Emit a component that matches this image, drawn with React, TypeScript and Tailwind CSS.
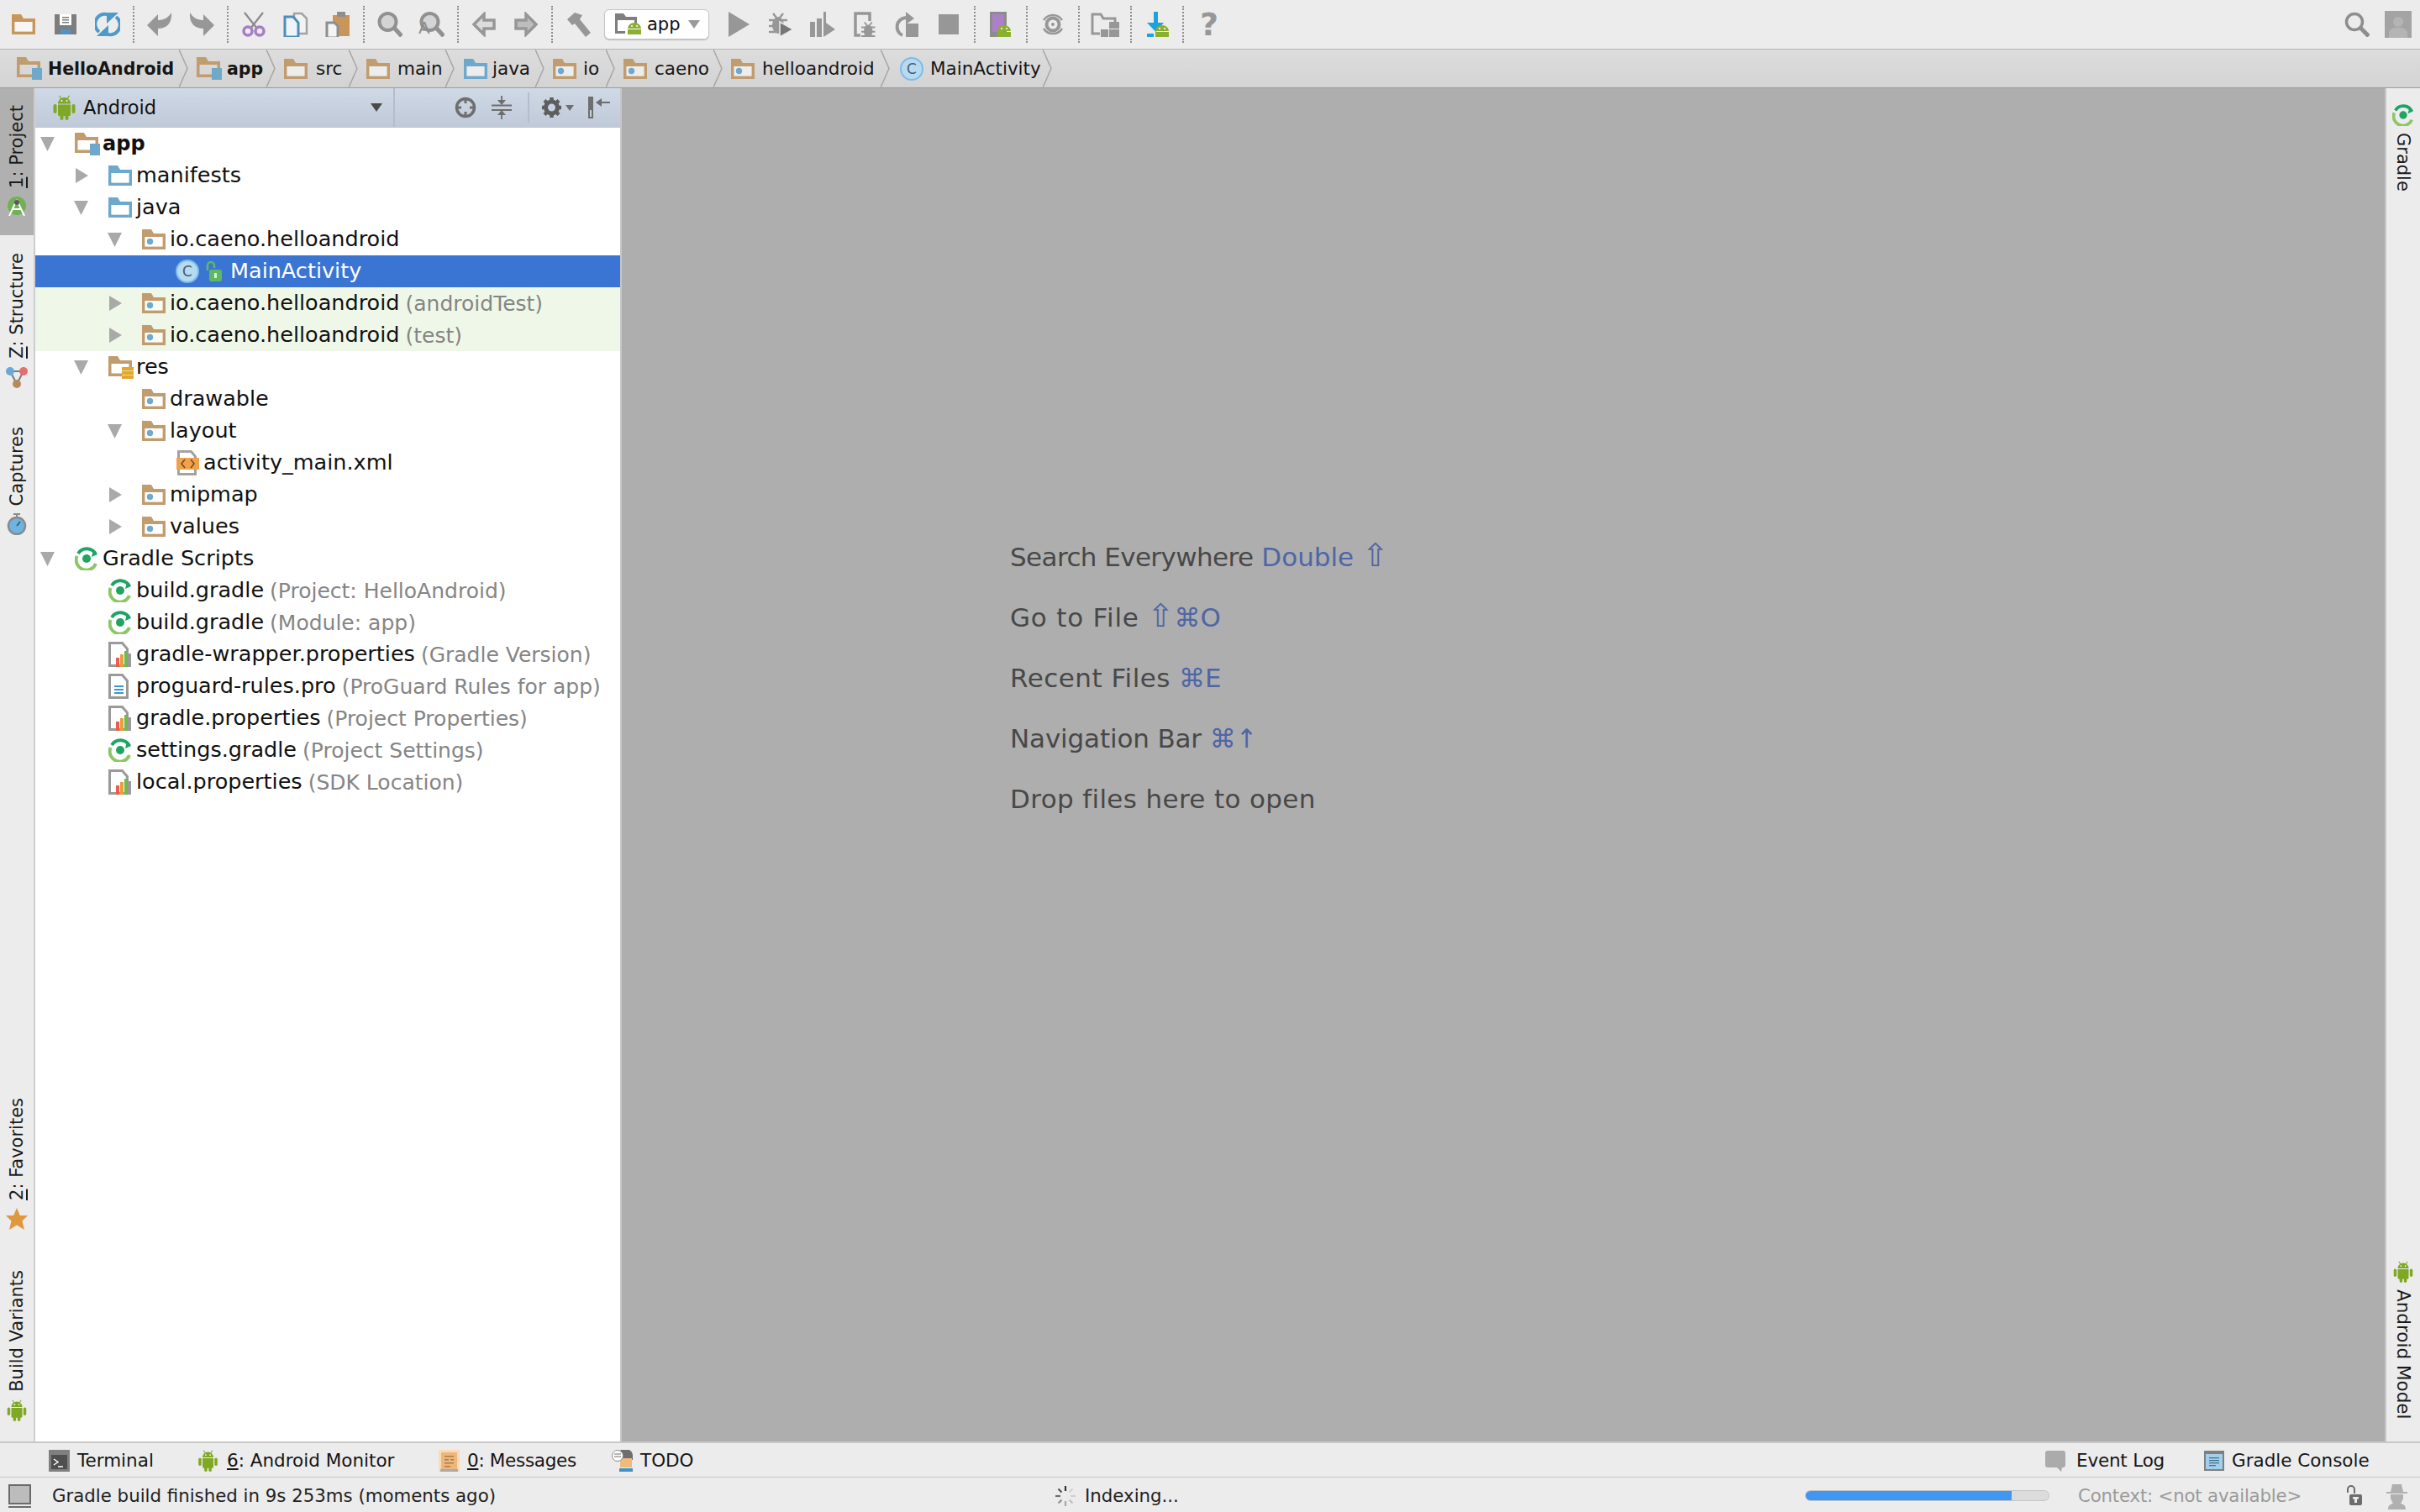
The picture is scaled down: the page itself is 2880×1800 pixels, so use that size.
import React from 'react';

const G = '#979797';

const Folder = ({ c = '#c19c6e', children, w = 28, h = 24, vw = 28, vh = 24 }: any) => (
  <svg width={w} height={h} viewBox={`0 0 ${vw} ${vh}`} className="shrink-0">
    <path fillRule="evenodd" fill={c} d="M0 0h11l3 5h14v19H0zM3.500 9v11.500h21V9z" />
    <path fill="#ffffff" fillOpacity="0.55" d="M3.500 9h21v11.500h-21z" />
    {children}
  </svg>
);
const Pkg = () => (
  <Folder>
    <circle cx="9.500" cy="14.500" r="3.700" fill="#6fa9cf" />
  </Folder>
);
const BlueFolder = () => <Folder c="#6ea8ca" />;
const ModFolder = ({ w = 30, h = 27 }: any) => (
  <svg width={w} height={h} viewBox="0 0 30 27" className="shrink-0">
    <path fillRule="evenodd" fill="#c19c6e" d="M0 0h11l3 5h14v19H0zM3.500 9v11.500h21V9z" />
    <path fill="#6ea8ca" d="M18 13h12v14H18z" />
  </svg>
);
const ResFolder = () => (
  <svg width="30" height="27" viewBox="0 0 30 27" className="shrink-0">
    <path fillRule="evenodd" fill="#c19c6e" d="M0 0h11l3 5h14v19H0zM3.500 9v11.500h21V9z" />
    <path fill="#e0a82e" d="M16 13h14v4H16zM16 18h14v4H16zM16 23h14v4H16z" />
    <path fill="#f6d98a" d="M16 17h14v1H16zM16 22h14v1H16z" />
  </svg>
);
const Gradle = ({ s = 28 }: any) => (
  <svg width={s} height={s} viewBox="0 0 28 28" className="shrink-0">
    <path d="M4 8 A12 12 0 0 1 25 9" fill="none" stroke="#1fa463" strokeWidth="4" />
    <path d="M2.500 11 A12 12 0 0 0 25 20" fill="none" stroke="#8cc665" strokeWidth="4" />
    <path d="M22 4 L27 9 L20 12 Z" fill="#1fa463" />
    <circle cx="14" cy="14" r="5" fill="#1fa463" />
  </svg>
);
const Props = () => (
  <svg width="28" height="30" viewBox="0 0 28 30" className="shrink-0">
    <path fill="#ffffff" stroke="#9a9a9a" strokeWidth="3" d="M1.500 1.500h15l6 7v20h-21z" />
    <path fill="#e5604f" d="M9 19h4v11H9z" />
    <path fill="#ef9a3c" d="M14 15h4v15h-4z" />
    <path fill="#6fb94f" d="M19 11h4v19h-4z" />
    <path fill="#9a9a9a" d="M24 14h3v16h-3z" />
  </svg>
);
const TextDoc = () => (
  <svg width="28" height="30" viewBox="0 0 28 30" className="shrink-0">
    <path fill="#ffffff" stroke="#9a9a9a" strokeWidth="3" d="M1.500 1.500h15l6 7v20h-21z" />
    <path fill="#3f97c9" d="M7 14h11v2H7zM7 18h11v2H7zM7 22h11v2H7z" />
  </svg>
);
const XmlFile = () => (
  <svg width="28" height="30" viewBox="0 0 28 30" className="shrink-0">
    <path fill="#ffffff" stroke="#a2a2a2" strokeWidth="3" d="M3.500 1.500h15l5 6v21h-20z" />
    <path fill="#f0a24b" d="M1 9h27v14H1z" />
    <path fill="none" stroke="#6b4a22" strokeWidth="1.500" d="M11 11l-4 5 4 5M18 11l4 5-4 5" />
  </svg>
);
const ClassIcon = ({ s = 28 }: any) => (
  <svg width={s} height={s} viewBox="0 0 28 28" className="shrink-0">
    <circle cx="14" cy="14" r="13" fill="#b6daf2" stroke="#7dbce8" strokeWidth="2" />
    <text x="14" y="20" textAnchor="middle" fontSize="17" fontFamily="DejaVu Sans" fill="#4c5a66">C</text>
  </svg>
);
const OpenLock = () => (
  <svg width="19" height="24" viewBox="0 0 19 24" className="shrink-0">
    <path fill="none" stroke="#5fb864" strokeWidth="2.500" d="M2 11V5a4 4 0 0 1 8 0v3" />
    <rect x="4" y="10" width="15" height="14" rx="2" fill="#5fb864" />
    <path fill="#d8f0da" d="M10 14h3v6h-3z" />
  </svg>
);
const Android = ({ w = 27, h = 30 }: any) => (
  <svg width={w} height={h} viewBox="0 0 27 30" className="shrink-0">
    <g fill="#7fa825">
      <path d="M6 10.500a7.500 7.500 0 0 1 15 0z" />
      <path d="M8 0.500l2.500 4-1 .6-2.500-4zM19 0.500l-2.500 4 1 .6 2.500-4z" />
      <path d="M6 11.500h15v12a1.500 1.500 0 0 1-1.500 1.500h-12a1.500 1.500 0 0 1-1.500-1.500z" />
      <rect x="0.500" y="11" width="4" height="11" rx="2" />
      <rect x="22.500" y="11" width="4" height="11" rx="2" />
      <rect x="8.500" y="22" width="4" height="8" rx="2" />
      <rect x="14.500" y="22" width="4" height="8" rx="2" />
    </g>
    <circle cx="10.500" cy="7" r="1" fill="#ffffff" />
    <circle cx="16.500" cy="7" r="1" fill="#ffffff" />
  </svg>
);
const Head = ({ x, y }: any) => (
  <g transform={`translate(${x} ${y})`} fill="#8bb02f">
    <path d="M0 7a8 7 0 0 1 16 0z" />
    <path d="M0 8h16v6H0z" />
    <circle cx="5" cy="4" r="1" fill="#ffffff" />
    <circle cx="11" cy="4" r="1" fill="#ffffff" />
  </g>
);
const S = ({ w = 30, h = 30, children }: any) => (
  <svg width={w} height={h} viewBox={`0 0 ${w} ${h}`} className="shrink-0">
    {children}
  </svg>
);

const Undo = () => <S><path fill={G} d="M0 16 L13 3 V10 C21 10 26 6 29 1 C30 14 23 20 13 20 V29 Z" /></S>;
const Redo = () => <S><path fill={G} d="M30 16 L17 3 V10 C9 10 4 6 1 1 C0 14 7 20 17 20 V29 Z" /></S>;
const Cut = () => (
  <S>
    <path stroke="#8a8a8a" strokeWidth="2.200" d="M4 1 L19 20M26 1 L11 20" />
    <circle cx="8" cy="23" r="5" fill="none" stroke="#a47fc4" strokeWidth="3.500" />
    <circle cx="22" cy="23" r="5" fill="none" stroke="#a47fc4" strokeWidth="3.500" />
  </S>
);
const Copy = () => (
  <S>
    <path fill="#f2f2f2" stroke="#a2a2a2" strokeWidth="2.500" d="M13 2h9l6 6v18H13z" />
    <path fill="#eef5fa" stroke="#4f8eb5" strokeWidth="3" d="M2 6h10l6 7v17H2z" />
  </S>
);
const Paste = () => (
  <S>
    <path fill="#c8965a" d="M9 4h20v25H9z" />
    <path fill="#8e8e8e" d="M14 0h10v6H14z" />
    <path fill="#f4f4f4" stroke="#8e8e8e" strokeWidth="3" d="M2 13h9l4 4v14H2z" />
  </S>
);
const Find = () => (
  <S>
    <circle cx="12.500" cy="12" r="10" fill="#d4d4d4" stroke="#919191" strokeWidth="4" />
    <path stroke="#919191" strokeWidth="5" d="M20 19 L29 29" />
  </S>
);
const Replace = () => (
  <div className="relative h-[30px] w-[30px] shrink-0">
    <Find />
    <span className="absolute left-[-1px] top-[8px] text-[20px] leading-[22px] text-[#8e8e8e]">A</span>
  </div>
);
const Back = () => <S w={28}><path fill="#dcdcdc" stroke={G} strokeWidth="3.500" strokeLinejoin="miter" d="M2 15 L14 3 V10 H26 V20 H14 V27 Z" /></S>;
const Fwd = () => <S w={28}><path fill="#bdbdbd" stroke={G} strokeWidth="3.500" d="M26 15 L14 3 V10 H2 V20 H14 V27 Z" /></S>;
const Hammer = () => <S><path fill={G} d="M2 9 L11 1 L20 4 L17 9 L30 25 L24 30 L11 14 L8 16 Z" /></S>;
const Run = () => <S w={26}><path fill={G} d="M1 0 L26 15 L1 30Z" /></S>;
const BugBody = ({ x = 0, y = 0, s = 1 }: any) => (
  <g transform={`translate(${x} ${y}) scale(${s})`} fill={G} stroke={G}>
    <ellipse cx="11" cy="16" rx="7" ry="10" stroke="none" />
    <path strokeWidth="2.500" fill="none" d="M5 2 L9 7M17 2 L13 7M0 10H22M0 17H22M0 24H22" />
  </g>
);
const Debug = () => (
  <S>
    <BugBody x={1} y={0} />
    <path fill="#777777" stroke="#ececec" strokeWidth="1.500" d="M14 12 L30 21 L14 30Z" />
  </S>
);
const Coverage = () => (
  <S>
    <path fill={G} d="M0 12h6v18H0zM8 8h6v22H8zM16 0h3v14h-3z" />
    <path fill={G} d="M16 11 L30 21 L16 30Z" />
  </S>
);
const Attach = () => (
  <S w={26}>
    <path fill="none" stroke={G} strokeWidth="3.500" d="M8 28H2V2h17v9" />
    <BugBody x={9} y={11} s={0.75} />
  </S>
);
const Rerun = () => (
  <S>
    <path fill="none" stroke={G} strokeWidth="4" d="M10 28 A11 11 0 0 1 14 7" />
    <path fill={G} d="M14 0 L24 8 L14 15Z" />
    <path fill={G} d="M14 14h15v16H14z" />
  </S>
);
const Stop = () => <S w={24} h={24}><path fill={G} d="M0 0h24v24H0z" /></S>;
const Avd = () => (
  <S w={26}>
    <path fill="#8c8c8c" d="M0 0h20v30H0z" />
    <path fill="#ab80c6" d="M3 3h14v21H3z" />
    <Head x={9} y={16} />
  </S>
);
const SyncProject = () => (
  <S w={26}>
    <path fill="none" stroke={G} strokeWidth="2.500" d="M2 10 A13 13 0 0 1 24 10M24 20 A13 13 0 0 1 2 20" />
    <circle cx="13" cy="15" r="7.500" fill="none" stroke={G} strokeWidth="4" />
    <circle cx="13" cy="15" r="2" fill={G} />
  </S>
);
const ProjectStructure = () => (
  <S w={34}>
    <path fill="none" stroke={G} strokeWidth="3" d="M11 26H2V3h10l3 5h14v4" />
    <path fill={G} d="M22 12h12v8H22zM12 21h9v9h-9zM22 21h12v9H22z" />
  </S>
);
const Sdk = () => (
  <S w={27}>
    <path fill="#1da2e0" d="M9 0h5v13h7L11.500 24 1 13h8zM1 26h8v4H1z" />
    <Head x={11} y={16} />
  </S>
);
const Sep = () => <div className="mx-[5px] h-[44px] w-[2px] border-l-2 border-dotted border-[#8f8f8f]" />;
const Cell = ({ children }: any) => <div className="flex h-full w-[50px] shrink-0 items-center justify-center">{children}</div>;

const Toolbar = () => (
  <div className="flex h-[58px] shrink-0 items-center bg-[#ececec] pl-[3px]">
    <Cell><Folder c="#c8965a" /></Cell>
    <Cell>
      <S w={28}>
        <path fill="#7d7d7d" d="M1 3h26v24H1z" />
        <path fill="#ffffff" d="M7 3h14v13H7z" />
        <path fill="#7d7d7d" d="M10 6h8v1.500h-8zM10 9h8v1.500h-8zM10 12h8v1.500h-8z" />
        <path fill="#4f94c4" d="M8 21h12v6H8z" />
      </S>
    </Cell>
    <Cell>
      <S>
        <path fill="none" stroke="#4e9ac8" strokeWidth="4" d="M5 24 A11 11 0 0 1 19 5M25 6 A11 11 0 0 1 11 25" />
        <path fill="#4e9ac8" d="M14 1h14L14 14ZM2 29h14L16 16Z" />
      </S>
    </Cell>
    <Sep />
    <Cell><Undo /></Cell>
    <Cell><Redo /></Cell>
    <Sep />
    <Cell><Cut /></Cell>
    <Cell><Copy /></Cell>
    <Cell><Paste /></Cell>
    <Sep />
    <Cell><Find /></Cell>
    <Cell><Replace /></Cell>
    <Sep />
    <Cell><Back /></Cell>
    <Cell><Fwd /></Cell>
    <Sep />
    <Cell><Hammer /></Cell>
    <div className="ml-[6px] flex h-[36px] w-[125px] shrink-0 items-center rounded-[6px] border border-[#c6c6c6] bg-white pl-[12px] shadow-[0_1px_1px_rgba(0,0,0,0.2)]">
      <svg width="34" height="26" viewBox="0 0 34 26" className="shrink-0">
        <path fillRule="evenodd" fill="#7f7f7f" d="M0 0h10l3 4h13v8h-3V8H3v13h9v3H0z" />
        <Head x={15} y={11} />
      </svg>
      <span className="ml-[4px] text-[21px] leading-none text-[#111]">app</span>
      <svg width="14" height="10" viewBox="0 0 14 10" className="ml-[9px] shrink-0"><path fill="#9a9a9a" d="M0 0h14L7 10z" /></svg>
    </div>
    <div className="w-[10px] shrink-0" />
    <Cell><Run /></Cell>
    <Cell><Debug /></Cell>
    <Cell><Coverage /></Cell>
    <Cell><Attach /></Cell>
    <Cell><Rerun /></Cell>
    <Cell><Stop /></Cell>
    <Sep />
    <Cell><Avd /></Cell>
    <Sep />
    <Cell><SyncProject /></Cell>
    <Sep />
    <Cell><ProjectStructure /></Cell>
    <Sep />
    <Cell><Sdk /></Cell>
    <Sep />
    <Cell><span className="text-[38px] font-bold leading-none text-[#979797]">?</span></Cell>
    <div className="flex-1" />
    <S>
      <circle cx="12" cy="12" r="9.500" fill="none" stroke="#8e8e8e" strokeWidth="3.500" />
      <path stroke="#8e8e8e" strokeWidth="5" d="M19 19 L29 29" />
    </S>
    <div className="ml-[18px] mr-[10px] flex h-[32px] w-[32px] shrink-0 items-end justify-center overflow-hidden bg-[#a4a4a4]">
      <svg width="26" height="28" viewBox="0 0 26 28"><circle cx="13" cy="9" r="6" fill="#b4b4b4" /><path fill="#b4b4b4" d="M2 28v-6a7 7 0 0 1 7-6h8a7 7 0 0 1 7 6v6z" /></svg>
    </div>
  </div>
);

const Chevron = () => (
  <svg width="11" height="45" viewBox="0 0 11 45" className="shrink-0">
    <path fill="none" stroke="#a6a6a6" strokeWidth="1.500" d="M0 0 L10 22.500 L0 45" />
  </svg>
);

const crumbs: any[] = [
  { icon: <ModFolder />, t: 'HelloAndroid', bold: true, ml: 'ml-[20px]', tw: 'w-[149px]', gap: 'ml-[7px]', ce: 'ml-[7px]' },
  { icon: <ModFolder />, t: 'app', bold: true, ml: 'ml-[10px]', tw: 'w-[40px]', gap: 'ml-[6px]', ce: 'ml-[7px]' },
  { icon: <Folder />, t: 'src', ml: 'ml-[10px]', tw: 'w-[31px]', gap: 'ml-[10px]', ce: 'ml-[8px]' },
  { icon: <Folder />, t: 'main', ml: 'ml-[10px]', tw: 'w-[50px]', gap: 'ml-[9px]', ce: 'ml-[7px]' },
  { icon: <BlueFolder />, t: 'java', ml: 'ml-[11px]', tw: 'w-[44px]', gap: 'ml-[6px]', ce: 'ml-[7px]' },
  { icon: <Pkg />, t: 'io', ml: 'ml-[10px]', tw: 'w-[19px]', gap: 'ml-[8px]', ce: 'ml-[8px]' },
  { icon: <Pkg />, t: 'caeno', ml: 'ml-[10px]', tw: 'w-[62px]', gap: 'ml-[9px]', ce: 'ml-[8px]' },
  { icon: <Pkg />, t: 'helloandroid', ml: 'ml-[10px]', tw: 'w-[133px]', gap: 'ml-[9px]', ce: 'ml-[8px]' },
  { icon: <ClassIcon />, t: 'MainActivity', ml: 'ml-[12px]', tw: 'w-[128px]', gap: 'ml-[8px]', ce: 'ml-[6px]' },
];

const Breadcrumb = () => (
  <div className="flex h-[47px] shrink-0 items-center border-y border-t-[#b4b4b4] border-b-[#9c9c9c] bg-gradient-to-b from-[#dddddd] to-[#d3d3d3]">
    {crumbs.map((c) => (
      <React.Fragment key={c.t}>
        <div className={`flex shrink-0 items-center ${c.ml}`}>{c.icon}</div>
        <span className={`${c.gap} ${c.tw} shrink-0 whitespace-nowrap pt-[2px] text-[#161616] ${c.bold ? 'text-[20.500px] font-bold' : 'text-[21.500px]'}`}>{c.t}</span>
        <div className={`${c.ce} shrink-0`}><Chevron /></div>
      </React.Fragment>
    ))}
  </div>
);

const Tab = ({ k, t, icon, box }: any) => (
  <div className={`flex w-[40px] shrink-0 flex-col items-center justify-end ${box}`}>
    <span className="whitespace-nowrap text-[21px] leading-[26px] text-[#1a1a1a] [writing-mode:vertical-rl] rotate-180">
      {k ? <span className="underline">{k}</span> : null}
      {t}
    </span>
    <div className="mt-[9px]">{icon}</div>
  </div>
);

const Left = () => (
  <div className="flex w-[42px] shrink-0 flex-col border-r-2 border-[#cdcdcd] bg-[#ececec]">
    <Tab
      k="1"
      t=": Project"
      box="h-[175px] bg-[#b0b0b0] pb-[23px]"
      icon={
        <svg width="24" height="24" viewBox="0 0 24 24">
          <circle cx="12" cy="12" r="11" fill="#72b054" />
          <path fill="none" stroke="#ffffff" strokeWidth="2" d="M12 5 L3 24M12 5 L21 24M6 16h12" />
          <circle cx="12" cy="8" r="3" fill="#5a5a5a" />
        </svg>
      }
    />
    <Tab
      k="Z"
      t=": Structure"
      box="h-[190px] pb-[8px]"
      icon={
        <svg width="26" height="26" viewBox="0 0 26 26">
          <path stroke="#7a7a7a" strokeWidth="2" fill="none" d="M5 6h16L13 21Z" />
          <circle cx="5" cy="6" r="5" fill="#6aa8d8" />
          <circle cx="21" cy="6" r="5" fill="#e36f6f" />
          <circle cx="13" cy="21" r="5" fill="#b78a5b" />
        </svg>
      }
    />
    <Tab
      t="Captures"
      box="h-[175px] pb-[8px]"
      icon={
        <svg width="24" height="26" viewBox="0 0 24 26">
          <path stroke="#8a8a8a" strokeWidth="2" d="M8 1h8M12 1v4" />
          <circle cx="12" cy="15" r="10" fill="#6cb4e4" stroke="#8a8a8a" strokeWidth="2.500" />
          <path stroke="#4a5a68" strokeWidth="2" d="M12 15l4-5" />
        </svg>
      }
    />
    <div className="flex-1" />
    <Tab
      k="2"
      t=": Favorites"
      box="h-[172px] pb-[8px]"
      icon={
        <svg width="26" height="26" viewBox="0 0 26 26">
          <path fill="#e0983e" d="M13 0l3.800 9h9.200l-6.500 6.500 2.500 10.500-9-5.500-9 5.500 2.500-10.500L0 9h9.200z" />
        </svg>
      }
    />
    <Tab t="Build Variants" box="h-[244px] pb-[24px]" icon={<Android w={24} h={26} />} />
  </div>
);

const Tri = ({ d }: any) =>
  d === 'down' ? (
    <svg width="17" height="17" viewBox="0 0 17 17"><path fill="#a9a9a9" d="M0 0h17L8.500 17z" /></svg>
  ) : d === 'right' ? (
    <svg width="15" height="18" viewBox="0 0 15 18" className="ml-[2px]"><path fill="#a9a9a9" d="M0 0l15 9-15 9z" /></svg>
  ) : null;

const pad = ['pl-[6px]', 'pl-[46px]', 'pl-[86px]', 'pl-[126px]'];

const rows: any[] = [
  { l: 0, a: 'down', i: <ModFolder />, t: 'app', bold: true },
  { l: 1, a: 'right', i: <BlueFolder />, t: 'manifests' },
  { l: 1, a: 'down', i: <BlueFolder />, t: 'java' },
  { l: 2, a: 'down', i: <Pkg />, t: 'io.caeno.helloandroid' },
  { l: 3, i: <ClassIcon />, lock: true, t: 'MainActivity', sel: true },
  { l: 2, a: 'right', i: <Pkg />, t: 'io.caeno.helloandroid', s: '(androidTest)', green: true },
  { l: 2, a: 'right', i: <Pkg />, t: 'io.caeno.helloandroid', s: '(test)', green: true },
  { l: 1, a: 'down', i: <ResFolder />, t: 'res' },
  { l: 2, i: <Pkg />, t: 'drawable' },
  { l: 2, a: 'down', i: <Pkg />, t: 'layout' },
  { l: 3, i: <XmlFile />, t: 'activity_main.xml' },
  { l: 2, a: 'right', i: <Pkg />, t: 'mipmap' },
  { l: 2, a: 'right', i: <Pkg />, t: 'values' },
  { l: 0, a: 'down', i: <Gradle />, t: 'Gradle Scripts' },
  { l: 1, i: <Gradle />, t: 'build.gradle', s: '(Project: HelloAndroid)' },
  { l: 1, i: <Gradle />, t: 'build.gradle', s: '(Module: app)' },
  { l: 1, i: <Props />, t: 'gradle-wrapper.properties', s: '(Gradle Version)' },
  { l: 1, i: <TextDoc />, t: 'proguard-rules.pro', s: '(ProGuard Rules for app)' },
  { l: 1, i: <Props />, t: 'gradle.properties', s: '(Project Properties)' },
  { l: 1, i: <Gradle />, t: 'settings.gradle', s: '(Project Settings)' },
  { l: 1, i: <Props />, t: 'local.properties', s: '(SDK Location)' },
];

const Tree = () => (
  <div className="flex w-[696px] shrink-0 flex-col">
    <div className="flex h-[47px] shrink-0 items-center border-b border-[#c4c4c4] bg-gradient-to-b from-[#d0d9e6] to-[#bfc9d8]">
      <div className="ml-[21px]"><Android /></div>
      <span className="ml-[9px] w-[88px] pt-[1px] text-[22.500px] text-[#111]">Android</span>
      <svg width="14" height="10" viewBox="0 0 14 10" className="ml-[254px] shrink-0"><path fill="#4a4a4a" d="M0 0h14L7 10z" /></svg>
      <div className="ml-[13px] h-full w-[2px] shrink-0 bg-[#b4bdcb]" />
      <svg width="26" height="26" viewBox="0 0 26 26" className="ml-[71px] shrink-0">
        <circle cx="13" cy="13" r="10.500" fill="none" stroke="#6e6e6e" strokeWidth="3.500" />
        <path stroke="#6e6e6e" strokeWidth="3" d="M13 1v7M13 18v7M1 13h7M18 13h7" />
      </svg>
      <svg width="24" height="28" viewBox="0 0 24 28" className="ml-[18px] shrink-0">
        <path stroke="#6e6e6e" strokeWidth="1.800" d="M0 11.500h24M0 17h24M12 0v8M12 20v8" />
        <path fill="#6e6e6e" d="M7 5h10l-5 6zM7 23h10l-5-6z" />
      </svg>
      <div className="ml-[19px] h-[36px] w-[2px] shrink-0 bg-[#b4bdcb]" />
      <svg width="25" height="26" viewBox="0 0 25 26" className="ml-[14px] shrink-0">
        <circle cx="12.500" cy="13" r="7" fill="none" stroke="#5e5e5e" strokeWidth="5" />
        <path stroke="#5e5e5e" strokeWidth="4.500" d="M12.500 1v5M12.500 20v5M1 13h5M19 13h5M4 4.500l3.500 3.500M21 21.500l-3.500-3.500M21 4.500l-3.500 3.500M4 21.500l3.500-3.500" />
      </svg>
      <svg width="10" height="7" viewBox="0 0 10 7" className="ml-[4px] shrink-0"><path fill="#6e6e6e" d="M0 0h10L5 7z" /></svg>
      <svg width="26" height="28" viewBox="0 0 26 28" className="ml-[17px] shrink-0">
        <path fill="#6e6e6e" d="M0 1h6v26H0z" />
        <path fill="#c8d0dc" d="M2 17h2v8H2z" />
        <path fill="none" stroke="#6e6e6e" strokeWidth="2" d="M11 8H26" />
        <path fill="#6e6e6e" d="M9 8l7-5v10z" />
      </svg>
    </div>
    <div className="flex-1 bg-white">
      {rows.map((r, i) => (
        <div
          key={i}
          className={`flex h-[38px] items-center ${pad[r.l]} ${r.sel ? 'bg-[#3b75d3]' : r.green ? 'bg-[#eff8e8]' : ''}`}
        >
          <div className="flex w-[41px] shrink-0 items-center"><Tri d={r.a} /></div>
          <div className="flex w-[28px] shrink-0 items-center">{r.i}</div>
          {r.lock ? <div className="ml-[8px]"><OpenLock /></div> : null}
          <span
            className={`whitespace-nowrap leading-none ${r.bold ? 'text-[24px] font-bold' : 'text-[25.500px]'} ${r.lock ? 'ml-[10px]' : 'ml-[5px]'} ${r.sel ? 'text-white' : 'text-[#111]'}`}
          >
            {r.t}
          </span>
          {r.s ? <span className="ml-[7px] whitespace-nowrap text-[25px] leading-none text-[#858585]">{r.s}</span> : null}
        </div>
      ))}
    </div>
  </div>
);

const Key = ({ children }: any) => <span className="text-[#4f66a6]">{children}</span>;
const Shift = () => <span className="text-[38px] leading-none">⇧</span>;

const Editor = () => (
  <div className="flex flex-1 flex-col border-l-2 border-[#c6c6c6] bg-[#aeaeae] pl-[462px] pt-[522px] text-[31px] leading-[72px] text-[#484848]">
    <div className="h-[72px] whitespace-nowrap"><span className="tracking-[-0.6px]">Search Everywhere</span> <Key>Double <Shift /></Key></div>
    <div className="h-[72px] whitespace-nowrap"><span className="tracking-[0.8px]">Go to File</span> <Key><Shift />⌘O</Key></div>
    <div className="h-[72px] whitespace-nowrap"><span className="tracking-[0.5px]">Recent Files</span> <Key>⌘E</Key></div>
    <div className="h-[72px] whitespace-nowrap"><span className="tracking-[-0.15px]">Navigation Bar</span> <Key>⌘↑</Key></div>
    <div className="h-[72px] whitespace-nowrap tracking-[0.35px]">Drop files here to open</div>
  </div>
);

const Right = () => (
  <div className="flex w-[42px] shrink-0 flex-col items-center border-l-2 border-[#c6c6c6] bg-[#ececec] pb-[26px] pt-[19px]">
    <Gradle s={26} />
    <span className="mt-[8px] whitespace-nowrap text-[21px] leading-[26px] text-[#1a1a1a] [writing-mode:vertical-rl]">Gradle</span>
    <div className="flex-1" />
    <Android w={24} h={26} />
    <span className="mt-[8px] whitespace-nowrap text-[21.500px] leading-[26px] text-[#1a1a1a] [writing-mode:vertical-rl]">Android Model</span>
  </div>
);

const BottomBar = () => (
  <div className="flex h-[42px] shrink-0 items-center border-t-2 border-[#c8c8c8] bg-[#ececec] pt-[2px] text-[21.500px] text-[#161616]">
    <svg width="25" height="26" viewBox="0 0 25 26" className="ml-[58px] shrink-0">
      <path fill="#7f7f7f" d="M0 0h25v26H0z" />
      <path fill="#4f4f4f" d="M3 6h19v17H3z" />
      <path fill="none" stroke="#ffffff" strokeWidth="1.500" d="M6 11l5 3.500-5 3.500M11 20h6" />
    </svg>
    <span className="ml-[9px] w-[94px] whitespace-nowrap">Terminal</span>
    <div className="ml-[49px]"><Android w={25} h={26} /></div>
    <span className="ml-[10px] w-[203px] whitespace-nowrap"><span className="underline">6</span>: Android Monitor</span>
    <svg width="25" height="26" viewBox="0 0 25 26" className="ml-[49px] shrink-0">
      <path fill="#f8dcb8" d="M0 0h25v26H0z" />
      <path fill="#eeb67a" d="M3 3h19v20H3z" />
      <path fill="#a97e4a" d="M7 7h11v1.500H7zM7 11h5v1.500H7zM14 11h4v1.500h-4zM7 15h11v1.500H7zM7 19h7v1.500H7z" />
      <path fill="#aaaaaa" d="M2 23h21v3H2z" />
    </svg>
    <span className="ml-[9px] w-[127px] whitespace-nowrap tracking-[-0.3px]"><span className="underline">0</span>: Messages</span>
    <svg width="26" height="26" viewBox="0 0 26 26" className="ml-[45px] shrink-0">
      <path fill="#6e6e6e" d="M7 6a9 7 0 0 1 18 0v6H7z" />
      <path fill="#f2b97c" d="M10 10h14v11H10z" />
      <path fill="#3c93c3" d="M9 22h16v4H9z" />
      <circle cx="7" cy="7" r="6.500" fill="#ffffff" stroke="#8a8a8a" strokeWidth="1" />
      <path stroke="#6e6e6e" strokeWidth="1.200" d="M3 5h8M3 8h8" />
    </svg>
    <span className="ml-[8px] whitespace-nowrap">TODO</span>
    <div className="flex-1" />
    <svg width="24" height="25" viewBox="0 0 24 25" className="shrink-0">
      <path fill="#ababab" d="M3 0h18a3 3 0 0 1 3 3v14a3 3 0 0 1-3 3h-1l-1 5-5-5H3a3 3 0 0 1-3-3V3a3 3 0 0 1 3-3z" />
    </svg>
    <span className="ml-[13px] w-[102px] whitespace-nowrap tracking-[-0.2px]">Event Log</span>
    <svg width="24" height="24" viewBox="0 0 24 24" className="ml-[50px] shrink-0">
      <path fill="#7f7f7f" d="M0 0h24v24H0z" />
      <path fill="#a3cfea" d="M2 4h20v18H2z" />
      <path fill="#3f6f8f" d="M6 8h12v1.200H6zM6 11h12v1.200H6zM6 14h12v1.200H6zM6 17h8v1.200H6z" />
    </svg>
    <span className="ml-[9px] w-[163px] whitespace-nowrap">Gradle Console</span>
    <div className="w-[61px] shrink-0" />
  </div>
);

const StatusBar = () => (
  <div className="flex h-[42px] shrink-0 items-center border-t border-[#c8c8c8] bg-[#ececec] pt-[2px] text-[21.300px] text-[#222]">
    <svg width="27" height="28" viewBox="0 0 27 28" className="ml-[10px] shrink-0">
      <path fill="#bcbcbc" stroke="#6a6a6a" strokeWidth="2" d="M1 1h25v22H1z" />
      <path fill="#6a6a6a" d="M0 26h27v2H0z" />
    </svg>
    <span className="ml-[25px] w-[527px] whitespace-nowrap">Gradle build finished in 9s 253ms (moments ago)</span>
    <svg width="26" height="26" viewBox="0 0 26 26" className="ml-[666px] shrink-0">
      <g strokeWidth="2.200">
        <path d="M13 1v6" stroke="#333333" />
        <path d="M21.500 4.500l-4 4" stroke="#cfcfcf" />
        <path d="M25 13h-6" stroke="#cfcfcf" />
        <path d="M21.500 21.500l-4-4" stroke="#bdbdbd" />
        <path d="M13 25v-6" stroke="#a8a8a8" />
        <path d="M4.500 21.500l4-4" stroke="#8f8f8f" />
        <path d="M1 13h6" stroke="#707070" />
        <path d="M4.500 4.500l4 4" stroke="#4f4f4f" />
      </g>
    </svg>
    <span className="ml-[10px] w-[114px] whitespace-nowrap">Indexing...</span>
    <div className="ml-[743px] h-[13px] w-[291px] shrink-0 overflow-hidden rounded-full border border-[#c4c4c4] bg-[#dcdcdc]">
      <div className="h-full w-[245px] bg-[#4097f2]" />
    </div>
    <span className="ml-[34px] w-[265px] whitespace-nowrap tracking-[-0.2px] text-[#9a9a9a]">Context: &lt;not available&gt;</span>
    <svg width="18" height="26" viewBox="0 0 18 26" className="ml-[55px] shrink-0">
      <path fill="none" stroke="#6c6c6c" strokeWidth="2" d="M1 9V5a4 4 0 0 1 8 0v5" />
      <rect x="3" y="11" width="15" height="13" rx="2" fill="#6c6c6c" />
      <path fill="#ececec" d="M7 14h7v2.500h-2V21h-3v-4.500H7z" />
    </svg>
    <svg width="25" height="32" viewBox="0 0 25 32" className="ml-[29px] shrink-0">
      <path fill="#b0b0b0" d="M7 2h11l2 9h5v2H0v-2h5zM5 14h15v5l-3 6h-9l-3-6zM2 32c0-5 3-7 7-7h7c4 0 7 2 7 7z" />
    </svg>
  </div>
);

export default function App() {
  return (
    <div className="flex h-[1800px] w-[2880px] flex-col overflow-hidden bg-[#ececec] font-['DejaVu_Sans',sans-serif]">
      <Toolbar />
      <Breadcrumb />
      <div className="flex min-h-0 flex-1">
        <Left />
        <Tree />
        <Editor />
        <Right />
      </div>
      <BottomBar />
      <StatusBar />
    </div>
  );
}
